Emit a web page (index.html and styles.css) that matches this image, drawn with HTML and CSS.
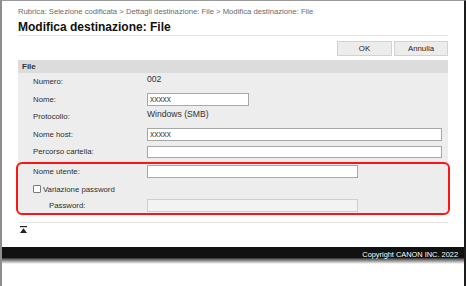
FILE: index.html
```html
<!DOCTYPE html>
<html lang="it">
<head>
<meta charset="utf-8">
<title>Modifica destinazione: File</title>
<link rel="stylesheet" href="styles.css">
</head>
<body>
<div class="frame">
  <div class="main">
    <div class="crumbs">Rubrica: Selezione codificata &gt; Dettagli destinazione: File &gt; Modifica destinazione: File</div>
    <h1 class="title">Modifica destinazione: File</h1>
    <div class="actions">
      <button class="btn btn-ok" type="button">OK</button>
      <button class="btn btn-cancel" type="button">Annulla</button>
    </div>
    <div class="section-head">File</div>
    <div class="panel">
      <div class="row"><span class="lbl">Numero:</span><span class="val">002</span></div>
      <div class="row"><span class="lbl">Nome:</span><input class="field w-s" type="text" value="xxxxx"></div>
      <div class="row"><span class="lbl">Protocollo:</span><span class="val">Windows (SMB)</span></div>
      <div class="row"><span class="lbl">Nome host:</span><input class="field w-l" type="text" value="xxxxx"></div>
      <div class="row"><span class="lbl">Percorso cartella:</span><input class="field w-l" type="text" value=""></div>
      <div class="highlight">
        <div class="row row-user"><span class="lbl">Nome utente:</span><input class="field w-m" type="text" value=""></div>
        <div class="row row-check"><label class="check"><span class="box"></span>Variazione password</label></div>
        <div class="row row-pass"><span class="lbl lbl-indent">Password:</span><input class="field w-m field-disabled" type="password" value="" disabled></div>
      </div>
    </div>
    <div class="rule"></div>
    <div class="totop">
      <svg width="7" height="7" viewBox="0 0 7 7"><rect x="0" y="0" width="7" height="1.2" fill="#222"/><polygon points="3.5,2.2 7,7 0,7" fill="#222"/></svg>
    </div>
  </div>
  <div class="footer">Copyright CANON INC. 2022</div>
</div>
</body>
</html>
```
FILE: styles.css
```css
html, body {
  margin: 0;
  padding: 0;
  background: #fff;
}
body {
  font-family: "Liberation Sans", Arial, sans-serif;
  color: #333;
}
.frame {
  box-sizing: border-box;
  width: 466px;
  height: 286px;
  border-left: 2px solid #8e8e8e;
  border-top: 1px solid #9a9a9a;
  border-right: 2px solid #1c1c1c;
  overflow: hidden;
}
.main {
  margin-left: 16px;
  width: 430px;
}
.crumbs {
  margin-top: 6px;
  font-size: 7.7px;
  line-height: 10px;
  color: #6a6a6a;
  white-space: nowrap;
}
.title {
  margin: 3px 0 0;
  font-size: 12px;
  line-height: 15px;
  font-weight: bold;
  color: #111;
  border-bottom: 1px solid #e2e2e2;
}
.actions {
  margin-top: 5px;
  display: flex;
  justify-content: flex-end;
  gap: 2px;
}
.btn {
  box-sizing: border-box;
  height: 15px;
  padding: 0;
  margin: 0;
  border: 1px solid #d2d2d2;
  background: #ececec;
  font-family: "Liberation Sans", Arial, sans-serif;
  font-size: 7.8px;
  color: #222;
}
.btn-ok { width: 55px; }
.btn-cancel { width: 54px; }
.section-head {
  margin-top: 4px;
  height: 13px;
  line-height: 13px;
  background: #dcdcdc;
  padding-left: 4px;
  font-size: 8px;
  font-weight: bold;
  color: #333;
}
.panel {
  background: #ededed;
}
.row {
  display: flex;
  align-items: center;
  height: 17.5px;
  padding-left: 15px;
}
.lbl {
  width: 114px;
  flex: none;
  font-size: 7.8px;
  color: #2e2e2e;
}
.val {
  font-size: 8.6px;
  color: #333;
  margin-bottom: 5px;
}
.field {
  box-sizing: border-box;
  height: 12.5px;
  margin: 0;
  padding: 0 2px;
  border: 1px solid #a8a8a8;
  background: #fff;
  font-family: "Liberation Sans", Arial, sans-serif;
  font-size: 8.4px;
  color: #444;
  outline: none;
}
.w-s { width: 102px; }
.w-l { width: 295px; }
.w-m { width: 211px; }
.field-disabled {
  background: #f3f3f3;
  border-color: #cfcfcf;
}
.highlight {
  margin: 1px -2px 0;
  border: 2px solid #ff1414;
  border-radius: 6px;
  padding-bottom: 1.5px;
}
.highlight .row {
  padding-left: 15px;
}
.highlight .lbl {
  width: 114px;
}
.row-user { height: 15.5px; }
.row-check { height: 20px; }
.row-pass { height: 12.5px; }
.lbl-indent {
  box-sizing: border-box;
  padding-left: 16px;
}
.check {
  display: flex;
  align-items: center;
  font-size: 7.8px;
  color: #2e2e2e;
}
.box {
  box-sizing: border-box;
  width: 7.5px;
  height: 7.5px;
  border: 1px solid #7a7a7a;
  border-radius: 1px;
  background: #fff;
  margin-right: 2.5px;
}
.rule {
  margin-top: 7px;
  height: 1px;
  background: #e3e3e3;
}
.totop {
  margin-top: 3px;
  padding-left: 2px;
  height: 7px;
  line-height: 0;
}
.footer {
  margin-top: 14px;
  height: 17px;
  box-sizing: border-box;
  padding: 3px 6px 0 0;
  text-align: right;
  font-size: 7.4px;
  line-height: 10px;
  color: #fff;
  background: linear-gradient(to bottom, #111 0, #111 10.5px, #5a5a5a 12px, #fff 17px);
}
```
